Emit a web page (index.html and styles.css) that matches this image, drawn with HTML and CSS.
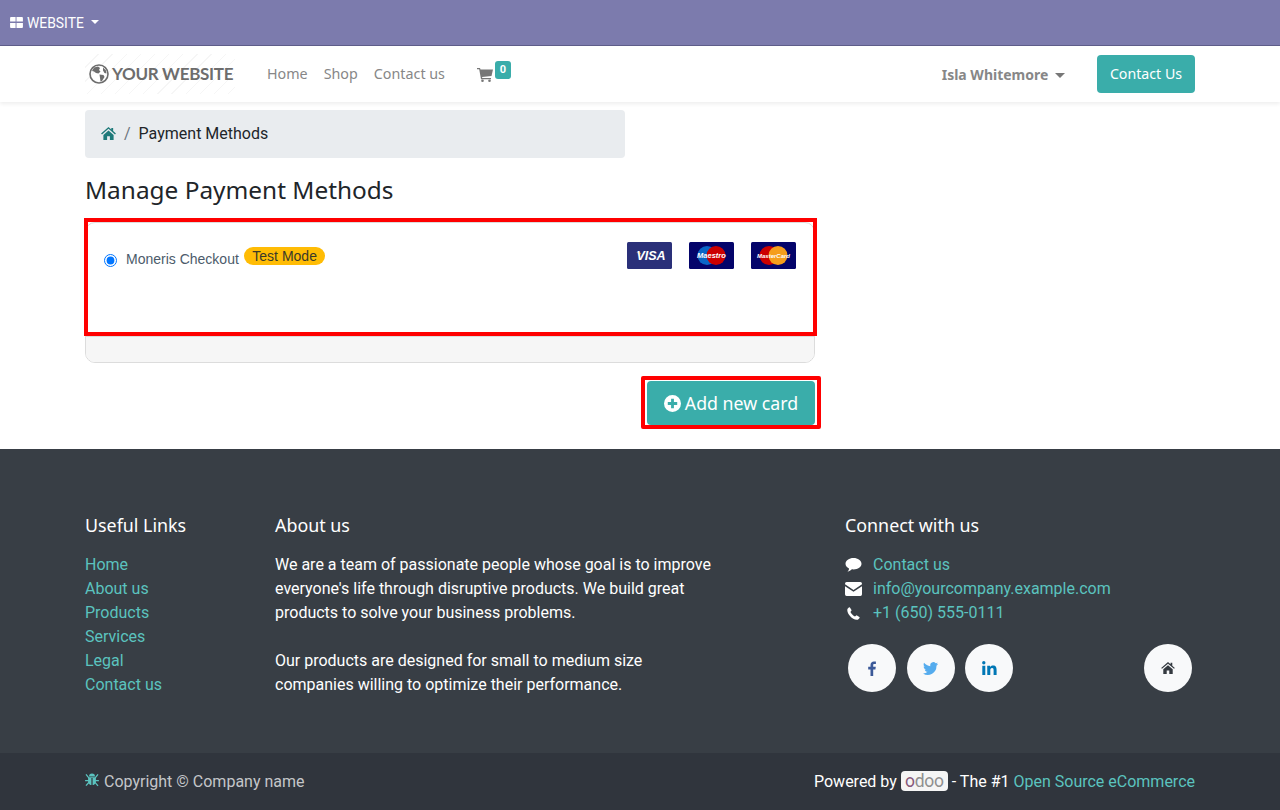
FILE: index.html
```html
<!doctype html>
<html lang="en">
<head>
  <meta charset="utf-8">
  <title>Manage Payment Methods</title>
  <link rel="stylesheet" href="styles.css">
</head>
<body>
  <div class="topbar">
    <svg class="apps-icon" viewBox="0 0 14 12"><path d="M0 1a1 1 0 0 1 1-1h5v5H0zM7 0h6a1 1 0 0 1 1 1v4H7zM0 6.500h6V12H1a1 1 0 0 1-1-1zM7 6.500h7V11a1 1 0 0 1-1 1H7z"/></svg>
    <span class="topbar-label">WEBSITE</span>
    <span class="caret caret-white"></span>
  </div>

  <header class="navbar">
    <div class="container nav-row">
      <a class="logo">
        <svg class="globe" viewBox="0 0 20 20"><circle cx="10" cy="10" r="9" fill="none" stroke="#6d6d6d" stroke-width="1.600"/><path fill="#6d6d6d" d="M5 3.500 9 2.500l2 1.500-1 2 1.500 1.500-2 2-2.500-.5L5 7.500 3 7zM10.500 10.500l4 .5 1 2-2.500 4-1.500.5-.5-3.500zM14 3.500l3 3 .5 3-2-.5-1.500-2.500z"/></svg>
        <span>YOUR WEBSITE</span>
      </a>
      <nav class="nav-links">
        <a>Home</a>
        <a>Shop</a>
        <a>Contact us</a>
      </nav>
      <a class="cart">
        <svg class="cart-icon" viewBox="0 0 16 14"><path d="M0 0h3l.5 1.500H16l-1.500 6.500-9.500 1 .3 1H14v1.200H4L2.200 1.200H0z"/><circle cx="5.500" cy="12.700" r="1.300"/><circle cx="12.500" cy="12.700" r="1.300"/></svg>
        <span class="cart-badge">0</span>
      </a>
      <a class="user-menu">Isla Whitemore <span class="caret"></span></a>
      <a class="btn-contact">Contact Us</a>
    </div>
  </header>

  <main class="container main">
    <div class="breadcrumb">
      <svg class="crumb-home" viewBox="0 0 16 14"><path d="M8 0 0 7l1 1 7-6 7 6 1-1-3-2.600V1h-2v1.700zM2.500 8.500 8 3.800l5.500 4.700V14H9.500v-4h-3v4h-4z"/></svg>
      <span class="crumb-sep">/</span>
      <span class="crumb-current">Payment Methods</span>
    </div>
    <h1 class="page-title">Manage Payment Methods</h1>

    <div class="pay-card">
      <div class="pay-body">
        <label class="pay-option">
          <input type="radio" name="acquirer" checked>
          <span class="pay-name">Moneris Checkout</span>
          <span class="test-badge">Test Mode</span>
        </label>
        <div class="pay-logos">
          <svg class="card-logo" viewBox="0 0 45 27">
            <rect width="45" height="27" rx="1.500" fill="#2a3079"/>
            <path d="M9 10.500h4l1.500 2z" fill="#f2a51f"/>
            <text x="24" y="18" class="visa-text">VISA</text>
          </svg>
          <svg class="card-logo" viewBox="0 0 45 27">
            <rect width="45" height="27" rx="1.500" fill="#04046a"/>
            <circle cx="18" cy="13.500" r="9.500" fill="#0a66c8"/>
            <circle cx="27" cy="13.500" r="9.500" fill="#cc0000"/>
            <text x="22.500" y="16" class="mini-text">Maestro</text>
          </svg>
          <svg class="card-logo" viewBox="0 0 45 27">
            <rect width="45" height="27" rx="1.500" fill="#04046a"/>
            <circle cx="18" cy="13.500" r="9.500" fill="#cc0000"/>
            <circle cx="27" cy="13.500" r="9.500" fill="#f59e1c"/>
            <text x="22.500" y="15.500" class="mini-text mini-small">MasterCard</text>
          </svg>
        </div>
      </div>
      <div class="pay-footer"></div>
      <div class="mark mark-card"></div>
    </div>

    <div class="add-row">
      <a class="btn-add">
        <svg class="plus-icon" viewBox="0 0 18 18"><path fill-rule="evenodd" d="M9 0a9 9 0 1 1 0 18A9 9 0 0 1 9 0zM7.500 4v3.500H4v3h3.500V14h3v-3.500H14v-3h-3.500V4z"/></svg>
        Add new card
        <span class="mark mark-btn"></span>
      </a>
    </div>
  </main>

  <footer class="footer">
    <div class="container footer-grid">
      <section>
        <h5 class="foot-title">Useful Links</h5>
        <ul class="foot-links">
          <li><a>Home</a></li>
          <li><a>About us</a></li>
          <li><a>Products</a></li>
          <li><a>Services</a></li>
          <li><a>Legal</a></li>
          <li><a>Contact us</a></li>
        </ul>
      </section>
      <section>
        <h5 class="foot-title">About us</h5>
        <p class="foot-text">We are a team of passionate people whose goal is to improve everyone's life through disruptive products. We build great products to solve your business problems.</p>
        <p class="foot-text">Our products are designed for small to medium size companies willing to optimize their performance.</p>
      </section>
      <section class="foot-connect">
        <h5 class="foot-title">Connect with us</h5>
        <ul class="foot-contact">
          <li>
            <svg class="contact-icon" viewBox="0 0 16 14"><path d="M8 0c4.400 0 8 2.500 8 5.700s-3.600 5.700-8 5.700c-.6 0-1.100 0-1.600-.1C5.300 12.400 3.700 13.400 2 13.700c.9-.9 1.500-2 1.500-3.300C1.400 9.400 0 7.700 0 5.700 0 2.500 3.600 0 8 0z"/></svg>
            <a>Contact us</a>
          </li>
          <li>
            <svg class="contact-icon" viewBox="0 0 16 13"><path d="M1.500 0h13A1.500 1.500 0 0 1 16 1.500v.6L8 7.400 0 2.100v-.6A1.500 1.500 0 0 1 1.500 0zM0 3.900l8 5.300 8-5.300v7.600a1.500 1.500 0 0 1-1.500 1.500h-13A1.500 1.500 0 0 1 0 11.500z"/></svg>
            <a>info@yourcompany.example.com</a>
          </li>
          <li>
            <svg class="contact-icon phone" viewBox="0 0 14 14"><path d="M3 .3 5 3.600 3.700 5.300c.8 1.800 2.900 3.900 4.900 5l1.700-1.300 3.400 2c-.3 1.400-1.600 2.800-3.200 2.800C5.500 13.800.2 7.500.3 3.300.3 1.900 1.600.6 3 .3z"/></svg>
            <a>+1 (650) 555-0111</a>
          </li>
        </ul>
        <div class="social-row">
          <a class="social">
            <svg class="soc-fb" viewBox="0 0 8 15"><path d="M5.200 15V8.400h2.200l.4-2.600H5.200V4.200c0-.8.2-1.300 1.300-1.300h1.400V.6C7.600.5 6.800.4 5.900.4 3.900.4 2.500 1.600 2.500 3.900v1.900H.2v2.600h2.300V15z"/></svg>
          </a>
          <a class="social">
            <svg class="soc-tw" viewBox="0 0 24 20"><path d="M24 2.400c-.9.400-1.800.7-2.800.8 1-.6 1.800-1.600 2.200-2.700-1 .6-2 1-3.100 1.200A4.900 4.900 0 0 0 11.800 6.200C7.700 6 4.100 4 1.700.9.400 3.200 1 6.100 3.200 7.500c-.8 0-1.500-.2-2.200-.6 0 2.400 1.700 4.400 3.900 4.900-.7.200-1.500.2-2.200.1.600 2 2.400 3.400 4.600 3.400A9.900 9.900 0 0 1 0 17.900 13.900 13.900 0 0 0 21.500 5.500c1-.7 1.800-1.600 2.500-3.100z"/></svg>
          </a>
          <a class="social">
            <svg class="soc-in" viewBox="0 0 15 14"><path d="M.3 4.700h3v9.300h-3zM1.800 0a1.700 1.700 0 1 1 0 3.400 1.700 1.700 0 0 1 0-3.400zM5.200 4.700H8V6c.5-.9 1.600-1.500 3-1.500 3 0 3.600 1.900 3.600 4.500v5h-3V9.600c0-1.100 0-2.500-1.500-2.500s-1.800 1.200-1.800 2.400V14h-3z"/></svg>
          </a>
          <a class="social social-home">
            <svg class="soc-home" viewBox="0 0 16 14"><path d="M8 0 0 7l1 1 7-6 7 6 1-1-3-2.600V1h-2v1.700zM2.500 8.500 8 3.800l5.500 4.700V14H9.500v-4h-3v4h-4z"/></svg>
          </a>
        </div>
      </section>
    </div>
  </footer>

  <div class="copyright">
    <div class="container copy-row">
      <span class="copy-left">
        <svg class="bug-icon" viewBox="0 0 14 14"><path d="M4 3.500a3 3 0 0 1 6 0zM1.500 1l2.600 3.200h5.800L12.500 1l1 .8-2.600 3.200v2h3v1.200h-3v1.300l2.600 3-1 .8-2.300-2.800c-.4.900-1.200 1.500-2.600 1.500v-7h-1.200v7c-1.400 0-2.200-.6-2.600-1.500L1.500 13l-1-.8 2.600-3V8.200h-3V7h3V5L.5 1.800z"/></svg>
        Copyright © Company name
      </span>
      <span class="copy-right">
        Powered by <span class="odoo-badge"><span class="odoo-o">o</span>doo</span> - The #1 <a>Open Source eCommerce</a>
      </span>
    </div>
  </div>
</body>
</html>
```

FILE: styles.css
```css
* {
  box-sizing: border-box;
}
body {
  margin: 0;
  font-family: Roboto, sans-serif;
  font-size: 16px;
  line-height: 24px;
  color: #212529;
  background-color: #fff;
}
a {
  text-decoration: none;
}
.container {
  width: 1110px;
  margin: 0 auto;
}

/* top bar */
.topbar {
  display: flex;
  align-items: center;
  height: 46px;
  padding: 0 0 0 10px;
  background-color: #7c7bad;
  border-bottom: 1px solid #5f5e8b;
  color: #fff;
}
.apps-icon {
  width: 13px;
  height: 11px;
  margin-right: 4px;
  fill: #fff;
}
.topbar-label {
  font-size: 13.900px;
}
.caret {
  display: inline-block;
  width: 0;
  height: 0;
  margin-left: 3px;
  border-top: 5px solid #777;
  border-left: 5px solid transparent;
  border-right: 5px solid transparent;
  vertical-align: 2px;
}
.caret-white {
  margin-left: 7px;
  margin-bottom: 2px;
  border-top-color: #fff;
  border-left-width: 4px;
  border-right-width: 4px;
  border-top-width: 4px;
}

/* navbar */
.navbar {
  height: 56px;
  background-color: #fff;
  box-shadow: 0 2px 4px rgba(0,0,0,0.07);
  position: relative;
}
.nav-row {
  display: flex;
  align-items: center;
  height: 56px;
}
.logo {
  display: flex;
  align-items: center;
  flex: none;
  width: 150px;
  height: 40px;
  padding-left: 4px;
  margin-right: 32px;
  color: #6d6d6d;
  font-family: Lato, sans-serif;
  font-size: 17px;
  font-weight: 700;
  letter-spacing: -0.3px;
  white-space: nowrap;
  background-image: repeating-linear-gradient(135deg, transparent 0 9px, #f6f6f6 9px 10px);
}
.globe {
  flex: none;
  width: 20px;
  height: 20px;
  margin-right: 3px;
}
.nav-links {
  display: flex;
  gap: 16px;
  font-family: "Noto Sans", sans-serif;
  font-size: 14.300px;
  color: #878787;
}
.cart {
  display: flex;
  align-items: flex-start;
  margin-left: 32px;
  height: 30px;
  padding-top: 10px;
}
.cart-icon {
  width: 16px;
  height: 14px;
  margin-top: -1px;
  fill: #777;
}
.cart-badge {
  width: 16px;
  height: 18px;
  margin: -8px 0 0 2px;
  border-radius: 3px;
  background-color: #3aadaa;
  color: #fff;
  font-size: 11px;
  font-weight: 700;
  line-height: 17px;
  text-align: center;
}
.user-menu {
  margin-left: auto;
  padding-top: 1px;
  font-family: "Noto Sans", sans-serif;
  font-size: 14px;
  font-weight: 700;
  color: #878787;
}
.btn-contact {
  margin-left: 32px;
  width: 98px;
  height: 38px;
  border-radius: 4px;
  background-color: #3aadaa;
  color: #fff;
  font-family: "Noto Sans", sans-serif;
  font-size: 14.200px;
  line-height: 38px;
  text-align: center;
}

/* main */
.main {
  height: 347px;
  padding-top: 8px;
}
.breadcrumb {
  display: flex;
  align-items: center;
  width: 540px;
  height: 48px;
  padding: 0 16px;
  background-color: #e9ecef;
  border-radius: 4px;
}
.crumb-home {
  width: 15px;
  height: 13px;
  margin-top: -2px;
  fill: #1f7a7a;
}
.crumb-sep {
  margin: 0 8px;
  color: #6c757d;
}
.crumb-current {
  color: #212529;
}
.page-title {
  margin: 15px 0 15px;
  font-family: "Noto Sans", sans-serif;
  font-size: 24.400px;
  font-weight: 400;
  line-height: 34px;
  color: #212529;
}
.pay-card {
  position: relative;
  width: 730px;
  height: 141px;
  border: 1px solid #dcdcdc;
  border-radius: 10px;
}
.pay-body {
  display: flex;
  justify-content: space-between;
  height: 113px;
  padding: 19px 18px 0 18px;
}
.pay-option {
  display: flex;
  align-items: flex-start;
  font-family: "Liberation Sans", sans-serif;
  font-size: 14px;
  color: #4c5b6b;
}
.pay-option input {
  width: 13px;
  height: 13px;
  margin: 12px 9px 0 0;
}
.pay-name {
  margin-top: 5px;
  margin-right: 5px;
}
.test-badge {
  height: 18px;
  margin-top: 5px;
  padding: 0 8.500px;
  border-radius: 9px;
  background-color: #ffbc05;
  color: #3a3a2a;
  line-height: 18px;
}
.pay-logos {
  display: flex;
  gap: 17px;
}
.card-logo {
  width: 45px;
  height: 27px;
}
.visa-text {
  font-family: "Liberation Sans", sans-serif;
  font-size: 12.500px;
  font-weight: 700;
  font-style: italic;
  fill: #fff;
  text-anchor: middle;
}
.mini-text {
  font-family: "Liberation Sans", sans-serif;
  font-size: 7.500px;
  font-weight: 700;
  font-style: italic;
  fill: #fff;
  text-anchor: middle;
}
.mini-small {
  font-size: 6px;
}
.pay-footer {
  height: 26px;
  background-color: #f6f6f6;
  border-top: 1px solid #dcdcdc;
  border-radius: 0 0 9px 9px;
}
.mark {
  position: absolute;
  border: 4px solid #ff0000;
}
.mark-card {
  left: -2px;
  top: -5px;
  width: 733px;
  height: 118px;
}
.add-row {
  display: flex;
  justify-content: flex-end;
  width: 730px;
  margin-top: 18px;
}
.btn-add {
  position: relative;
  display: flex;
  align-items: center;
  justify-content: center;
  width: 168px;
  height: 44px;
  border-radius: 4px;
  background-color: #3aadaa;
  color: #fff;
  font-family: "Noto Sans", sans-serif;
  font-size: 17.750px;
}
.plus-icon {
  flex: none;
  width: 17px;
  height: 17px;
  margin-right: 4px;
  fill: #fff;
}
.mark-btn {
  left: -6px;
  top: -5px;
  width: 180px;
  height: 53px;
  border-radius: 2px;
}

/* footer */
.footer {
  height: 304px;
  padding-top: 64px;
  background-color: #383e45;
  color: #fff;
}
.footer-grid {
  display: grid;
  grid-template-columns: 190px 475px 445px;
}
.foot-connect {
  margin-left: 95px;
}
.foot-title {
  margin: 0 0 16px;
  font-family: "Noto Sans", sans-serif;
  font-size: 17.850px;
  font-weight: 400;
  line-height: 24px;
}
.foot-links,
.foot-contact {
  margin: 0;
  padding: 0;
  list-style: none;
}
.foot-links a,
.foot-contact a,
.copy-right a {
  color: #5bc3bf;
}
.foot-text {
  width: 445px;
  margin: 0 0 24px;
}
.foot-contact li {
  display: flex;
  align-items: center;
}
.contact-icon {
  flex: none;
  width: 17px;
  height: 14px;
  margin-right: 11px;
  fill: #fff;
}
.contact-icon.phone {
  width: 13px;
  height: 13px;
  margin: 0 13px 0 2px;
}
.social-row {
  display: flex;
  gap: 10.500px;
  margin: 19px 0 0 3px;
}
.social {
  display: flex;
  flex: none;
  align-items: center;
  justify-content: center;
  width: 48px;
  height: 48px;
  border-radius: 50%;
  background-color: #f8f9fa;
}
.social-home {
  margin-left: 120px;
}
.soc-fb {
  width: 8px;
  height: 15px;
  fill: #3b5998;
}
.soc-tw {
  width: 15px;
  height: 13px;
  fill: #55acee;
}
.soc-in {
  width: 15px;
  height: 14px;
  fill: #0077b5;
}
.soc-home {
  width: 14px;
  height: 12px;
  fill: #343a40;
}
.copyright {
  height: 57px;
  background-color: #30353d;
  color: #fff;
}
.copy-row {
  display: flex;
  align-items: center;
  justify-content: space-between;
  height: 57px;
}
.copy-left {
  color: #c4c6c9;
}
.bug-icon {
  width: 14px;
  height: 14px;
  margin-right: 1px;
  fill: #5bc3bf;
}
.odoo-badge {
  display: inline-block;
  width: 47px;
  height: 20px;
  border-radius: 4px;
  background-color: #f5f5f5;
  color: #8f8f8f;
  font-size: 17.500px;
  letter-spacing: -0.3px;
  line-height: 20px;
  text-align: center;
}
.odoo-o {
  color: #875a7b;
}
```
